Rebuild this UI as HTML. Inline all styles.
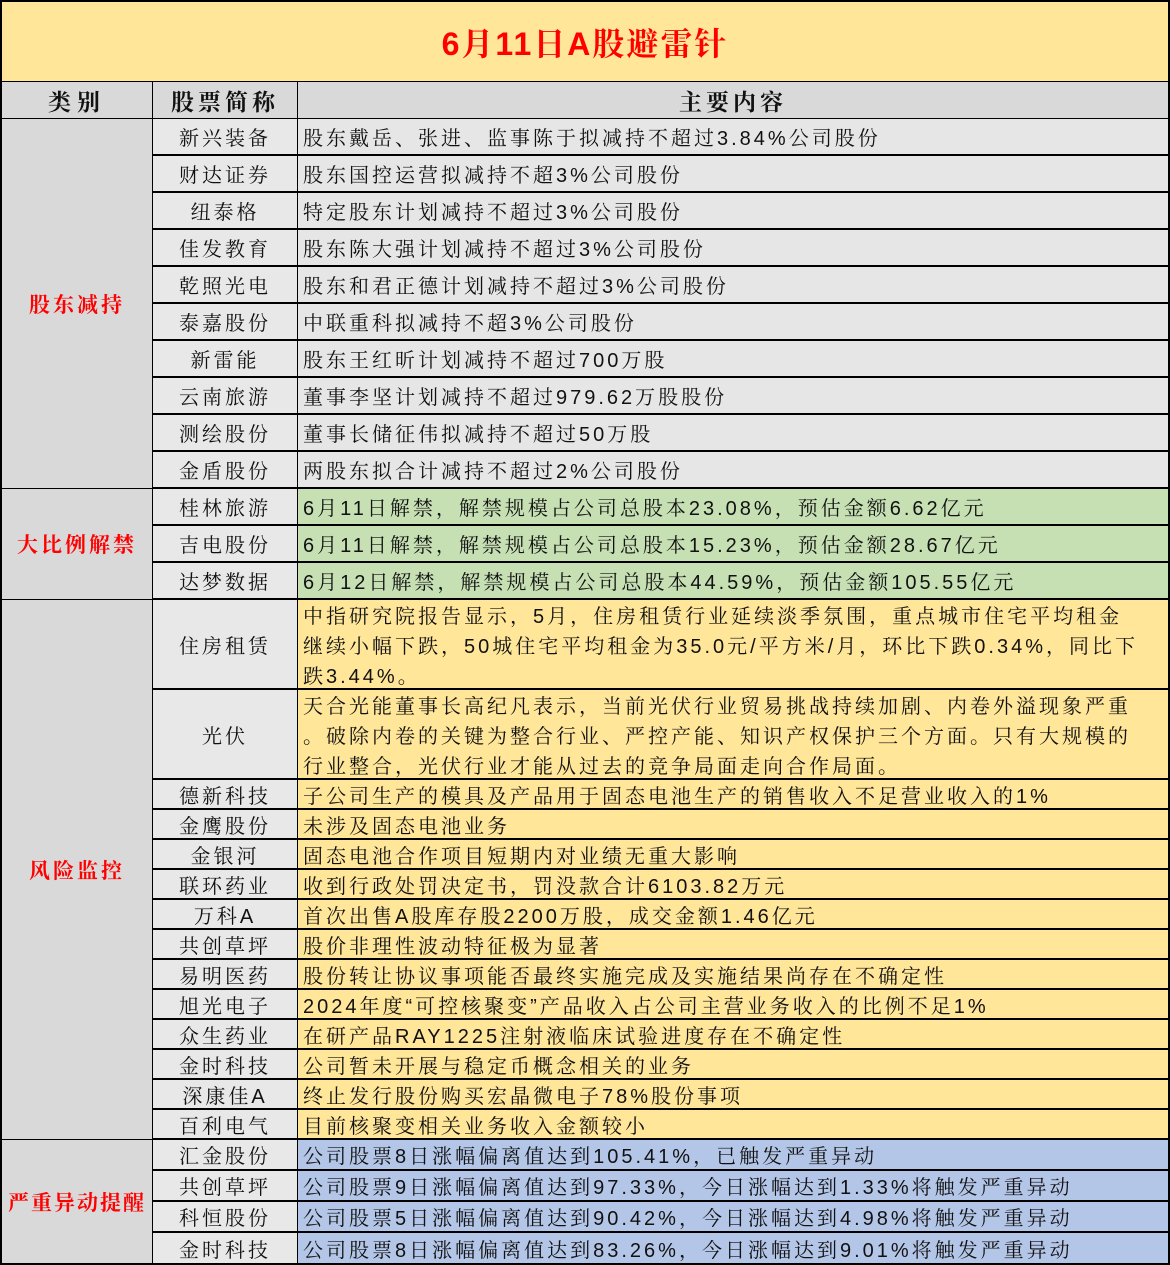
<!DOCTYPE html>
<html><head><meta charset="utf-8"><style>
body{margin:0;width:1170px;height:1265px;background:#fff;position:relative;overflow:hidden;font-family:"Liberation Sans","Noto Serif CJK SC",serif;color:#111}
.c{position:absolute;box-sizing:border-box;border-right:2px solid #000;border-bottom:2px solid #000;overflow:hidden;white-space:nowrap;font-size:20px;letter-spacing:3px}
.n{background:#e8e8e8;text-align:center;display:flex;align-items:center;justify-content:center}
.t{display:flex;align-items:center;padding-left:5px}
.k{background:#d9d9d9;color:#f00;font-weight:bold;display:flex;align-items:center;justify-content:center;font-size:21px}
.g{background:#e7e6e6}.gr{background:#c6e0b4}.y{background:#ffe699}.b{background:#b4c6e7}
.m{line-height:30px;padding-top:2px;align-items:flex-start;white-space:normal}
</style></head><body>
<div class="c" style="left:0;top:0;width:1170px;height:83px;background:#ffe699;border-left:2px solid #000;border-top:2px solid #000;color:#f00;font-size:32px;font-weight:bold;display:flex;align-items:center;justify-content:center;letter-spacing:2px">6月11日A股避雷针</div>
<div class="c" style="left:0;top:82px;width:154px;height:38px;background:#d9d9d9;border-left:2px solid #000;font-weight:bold;font-size:23px;display:flex;align-items:center;justify-content:center;letter-spacing:6px">类别</div>
<div class="c" style="left:153px;top:82px;width:146px;height:38px;background:#d9d9d9;font-weight:bold;font-size:23px;display:flex;align-items:center;justify-content:center;letter-spacing:4px">股票简称</div>
<div class="c" style="left:298px;top:82px;width:872px;height:38px;background:#d9d9d9;font-weight:bold;font-size:23px;display:flex;align-items:center;justify-content:center;letter-spacing:4px">主要内容</div>

<div class="c k" style="left:0;top:119px;width:154px;height:371px;border-left:2px solid #000">股东减持</div>
<div class="c k" style="left:0;top:489px;width:154px;height:112px;border-left:2px solid #000">大比例解禁</div>
<div class="c k" style="left:0;top:600px;width:154px;height:541px;border-left:2px solid #000">风险监控</div>
<div class="c k" style="left:0;top:1140px;width:154px;height:125px;border-left:2px solid #000;letter-spacing:2px">严重异动提醒</div>

<div id="rows"></div>
<script>
var R=[
[119,"新兴装备","股东戴岳、张进、监事陈于拟减持不超过3.84%公司股份","g"],
[156,"财达证券","股东国控运营拟减持不超3%公司股份","g"],
[193,"纽泰格","特定股东计划减持不超过3%公司股份","g"],
[230,"佳发教育","股东陈大强计划减持不超过3%公司股份","g"],
[267,"乾照光电","股东和君正德计划减持不超过3%公司股份","g"],
[304,"泰嘉股份","中联重科拟减持不超3%公司股份","g"],
[341,"新雷能","股东王红昕计划减持不超过700万股","g"],
[378,"云南旅游","董事李坚计划减持不超过979.62万股股份","g"],
[415,"测绘股份","董事长储征伟拟减持不超过50万股","g"],
[452,"金盾股份","两股东拟合计减持不超过2%公司股份","g"],
[489,"桂林旅游","6月11日解禁，解禁规模占公司总股本23.08%，预估金额6.62亿元","gr"],
[526,"吉电股份","6月11日解禁，解禁规模占公司总股本15.23%，预估金额28.67亿元","gr"],
[563,"达梦数据","6月12日解禁，解禁规模占公司总股本44.59%，预估金额105.55亿元","gr"],
[600,"住房租赁","中指研究院报告显示，5月，住房租赁行业延续淡季氛围，重点城市住宅平均租金<br>继续小幅下跌，50城住宅平均租金为35.0元/平方米/月，环比下跌0.34%，同比下<br>跌3.44%。","y m"],
[690,"光伏","天合光能董事长高纪凡表示，当前光伏行业贸易挑战持续加剧、内卷外溢现象严重<br>。破除内卷的关键为整合行业、严控产能、知识产权保护三个方面。只有大规模的<br>行业整合，光伏行业才能从过去的竞争局面走向合作局面。","y m"],
[780,"德新科技","子公司生产的模具及产品用于固态电池生产的销售收入不足营业收入的1%","y"],
[810,"金鹰股份","未涉及固态电池业务","y"],
[840,"金银河","固态电池合作项目短期内对业绩无重大影响","y"],
[870,"联环药业","收到行政处罚决定书，罚没款合计6103.82万元","y"],
[900,"万科A","首次出售A股库存股2200万股，成交金额1.46亿元","y"],
[930,"共创草坪","股价非理性波动特征极为显著","y"],
[960,"易明医药","股份转让协议事项能否最终实施完成及实施结果尚存在不确定性","y"],
[990,"旭光电子","2024年度“可控核聚变”产品收入占公司主营业务收入的比例不足1%","y"],
[1020,"众生药业","在研产品RAY1225注射液临床试验进度存在不确定性","y"],
[1050,"金时科技","公司暂未开展与稳定币概念相关的业务","y"],
[1080,"深康佳A","终止发行股份购买宏晶微电子78%股份事项","y"],
[1110,"百利电气","目前核聚变相关业务收入金额较小","y"],
[1140,"汇金股份","公司股票8日涨幅偏离值达到105.41%，已触发严重异动","b"],
[1171,"共创草坪","公司股票9日涨幅偏离值达到97.33%，今日涨幅达到1.33%将触发严重异动","b"],
[1202,"科恒股份","公司股票5日涨幅偏离值达到90.42%，今日涨幅达到4.98%将触发严重异动","b"],
[1233,"金时科技","公司股票8日涨幅偏离值达到83.26%，今日涨幅达到9.01%将触发严重异动","b"]
];
var h="";
R.forEach(function(r,i){
var nxt=i+1<R.length?R[i+1][0]:1265;var hh=nxt-r[0];
h+='<div class="c n" style="left:153px;top:'+r[0]+'px;width:146px;height:'+hh+'px">'+r[1]+'</div>';
h+='<div class="c t '+r[3]+'" style="left:298px;top:'+r[0]+'px;width:872px;height:'+hh+'px">'+(r[3].indexOf('m')>=0?'<div>'+r[2]+'</div>':r[2])+'</div>';
});
document.getElementById('rows').innerHTML=h;
</script>
</body></html>
